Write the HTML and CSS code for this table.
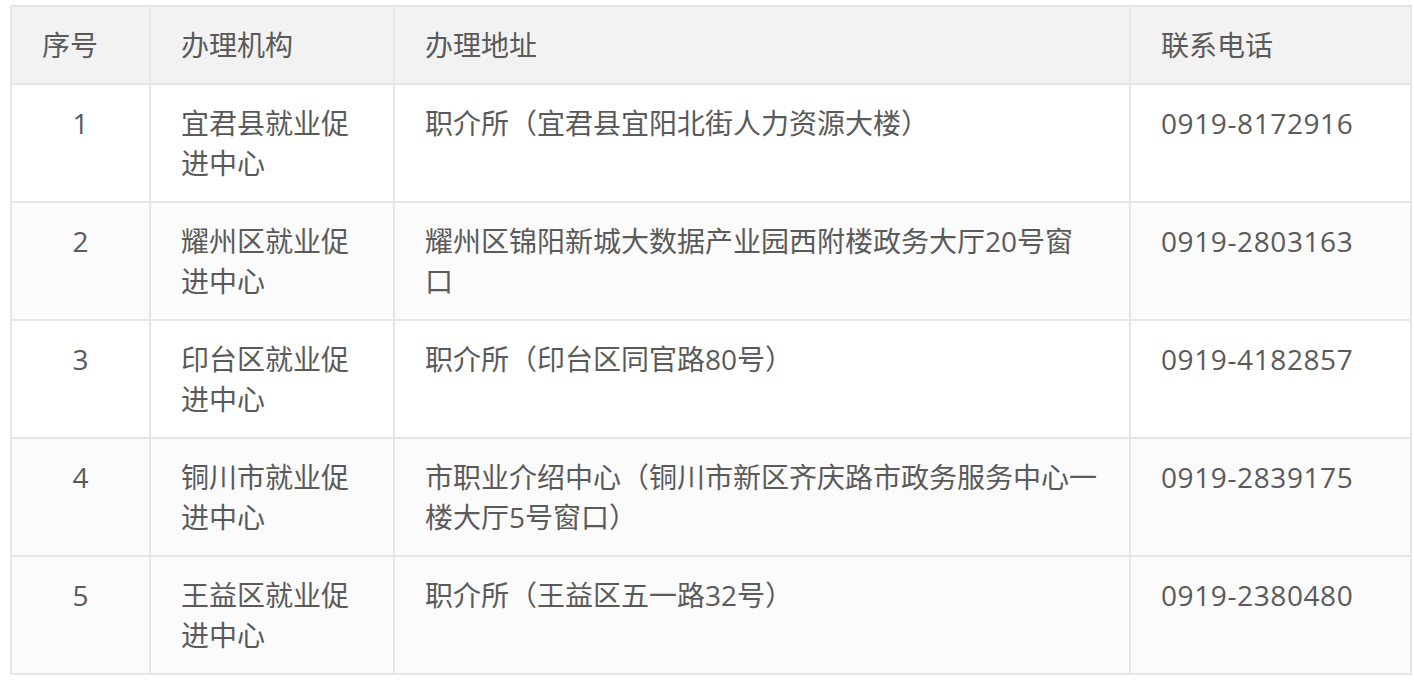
FILE: index.html
```html
<!DOCTYPE html>
<html lang="zh-CN">
<head>
<meta charset="utf-8">
<title>办理机构</title>
<link rel="stylesheet" href="styles.css">
</head>
<body>
<table class="info-table">
  <colgroup>
    <col class="c-no">
    <col class="c-org">
    <col class="c-addr">
    <col class="c-tel">
  </colgroup>
  <thead>
    <tr>
      <th>序号</th>
      <th>办理机构</th>
      <th>办理地址</th>
      <th>联系电话</th>
    </tr>
  </thead>
  <tbody>
    <tr>
      <td class="no">1</td>
      <td>宜君县就业促进中心</td>
      <td>职介所（宜君县宜阳北街人力资源大楼）</td>
      <td class="tel">0919-8172916</td>
    </tr>
    <tr class="alt">
      <td class="no">2</td>
      <td>耀州区就业促进中心</td>
      <td>耀州区锦阳新城大数据产业园西附楼政务大厅20号窗口</td>
      <td class="tel">0919-2803163</td>
    </tr>
    <tr>
      <td class="no">3</td>
      <td>印台区就业促进中心</td>
      <td>职介所（印台区同官路80号）</td>
      <td class="tel">0919-4182857</td>
    </tr>
    <tr class="alt">
      <td class="no">4</td>
      <td>铜川市就业促进中心</td>
      <td>市职业介绍中心（铜川市新区齐庆路市政务服务中心一楼大厅5号窗口）</td>
      <td class="tel">0919-2839175</td>
    </tr>
    <tr class="alt">
      <td class="no">5</td>
      <td>王益区就业促进中心</td>
      <td>职介所（王益区五一路32号）</td>
      <td class="tel">0919-2380480</td>
    </tr>
  </tbody>
</table>
</body>
</html>
```
FILE: styles.css
```css
html, body {
  margin: 0;
  padding: 0;
  background: #ffffff;
}

body {
  padding: 5px 0 0 10px;
  font-family: "Open Sans", "Noto Sans CJK SC", sans-serif;
  color: #5a5a5a;
}

.info-table {
  width: 1400px;
  table-layout: fixed;
  border-collapse: collapse;
  border: 2px solid #e6e6e6;
  font-size: 28px;
  line-height: 40px;
}

.c-no { width: 139px; }
.c-org { width: 244px; }
.c-addr { width: 736px; }
.c-tel { width: 281px; }

.info-table th,
.info-table td {
  border: 2px solid #e6e6e6;
  padding: 18px 30px;
  text-align: left;
  vertical-align: top;
  font-weight: normal;
}

.info-table thead th {
  background: #f2f2f2;
}

.info-table td.no {
  text-align: center;
  padding-left: 10px;
  padding-right: 10px;
}

.info-table td.tel {
  letter-spacing: 0.6px;
}

.info-table tbody tr {
  background: #ffffff;
}

.info-table tbody tr.alt {
  background: #fbfbfb;
}
```
